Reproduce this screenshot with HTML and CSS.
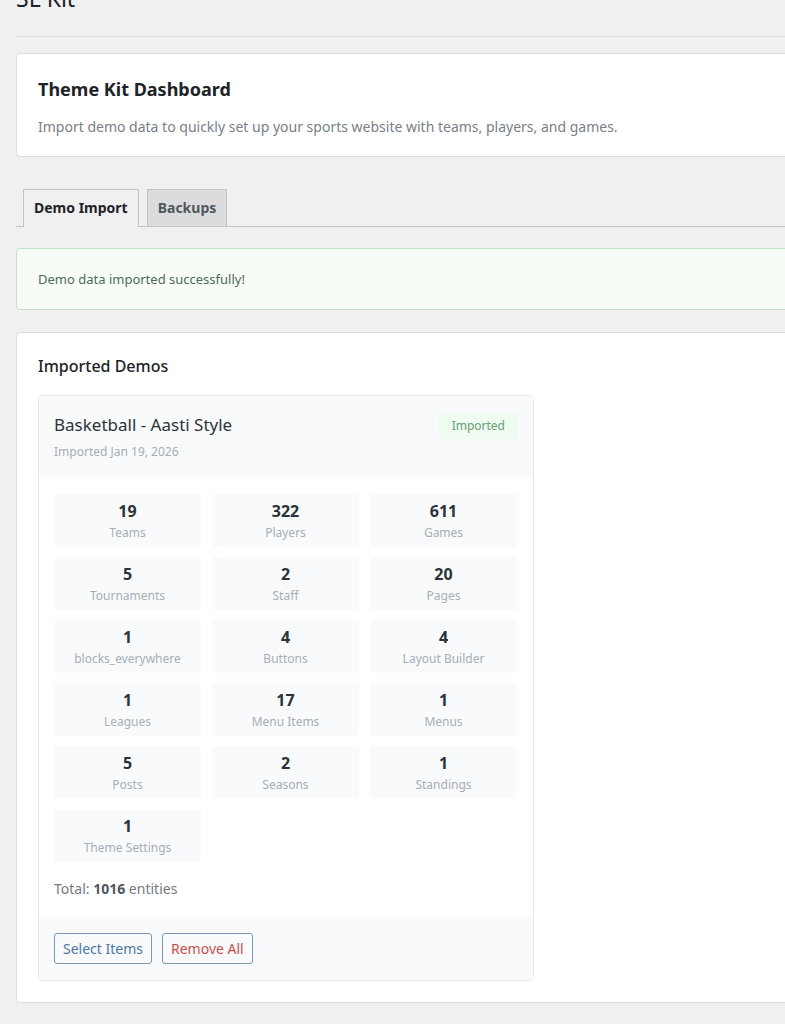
FILE: index.html
```html
<!DOCTYPE html>
<html lang="en">
<head>
  <meta charset="UTF-8" />
  <title>SL Kit</title>
  <link rel="stylesheet" href="styles.css">
</head>
<body>
  <div class="wrap">
    <h1 class="page-title">SL Kit</h1>
    <hr class="title-rule" />

    <div class="panel intro">
      <h2>Theme Kit Dashboard</h2>
      <p>Import demo data to quickly set up your sports website with teams, players, and games.</p>
    </div>

    <nav class="tabs">
      <a class="tab active">Demo Import</a>
      <a class="tab">Backups</a>
    </nav>

    <div class="notice">Demo data imported successfully!</div>

    <div class="panel demos">
      <h3>Imported Demos</h3>

      <div class="demo">
        <div class="demo-head">
          <div>
            <div class="demo-title">Basketball - Aasti Style</div>
            <div class="demo-date">Imported Jan 19, 2026</div>
          </div>
          <span class="badge">Imported</span>
        </div>

        <div class="demo-body">
          <div class="stats">
            <div class="stat"><strong>19</strong><span>Teams</span></div>
            <div class="stat"><strong>322</strong><span>Players</span></div>
            <div class="stat"><strong>611</strong><span>Games</span></div>
            <div class="stat"><strong>5</strong><span>Tournaments</span></div>
            <div class="stat"><strong>2</strong><span>Staff</span></div>
            <div class="stat"><strong>20</strong><span>Pages</span></div>
            <div class="stat"><strong>1</strong><span>blocks_everywhere</span></div>
            <div class="stat"><strong>4</strong><span>Buttons</span></div>
            <div class="stat"><strong>4</strong><span>Layout Builder</span></div>
            <div class="stat"><strong>1</strong><span>Leagues</span></div>
            <div class="stat"><strong>17</strong><span>Menu Items</span></div>
            <div class="stat"><strong>1</strong><span>Menus</span></div>
            <div class="stat"><strong>5</strong><span>Posts</span></div>
            <div class="stat"><strong>2</strong><span>Seasons</span></div>
            <div class="stat"><strong>1</strong><span>Standings</span></div>
            <div class="stat"><strong>1</strong><span>Theme Settings</span></div>
          </div>
          <p class="total">Total: <b>1016</b> entities</p>
        </div>

        <div class="demo-foot">
          <button class="btn btn-select">Select Items</button>
          <button class="btn btn-remove">Remove All</button>
        </div>
      </div>
    </div>
  </div>
</body>
</html>
```

FILE: styles.css
```css
body {
  margin: 0;
  background: #f0f0f1;
  font-family: 'Noto Sans', sans-serif;
  color: #1d2327;
  overflow: hidden;
}

.wrap {
  width: 1000px;
  padding-left: 16px;
}

.page-title {
  margin: -17px 0 0;
  font-size: 23px;
  font-weight: 400;
  line-height: 30px;
  color: #1d2327;
}

.title-rule {
  margin: 23px 0 0;
  border: 0;
  border-top: 1px solid #dcdcde;
}

.panel {
  background: #fff;
  border: 1px solid #dcdcde;
  border-radius: 4px;
  padding: 22px 21px;
}

.intro {
  margin-top: 16px;
  height: 59px;
  padding-bottom: 21px;
}

.intro h2 {
  margin: 0;
  font-size: 18px;
  font-weight: 700;
  line-height: 26px;
  color: #1d2327;
}

.intro p {
  margin: 15px 0 0;
  font-size: 14px;
  line-height: 20px;
  color: #7a8088;
}

.tabs {
  display: flex;
  gap: 8px;
  margin-top: 32px;
  padding-left: 7px;
  border-bottom: 1px solid #c3c4c7;
}

.tab {
  display: block;
  height: 36px;
  line-height: 36px;
  padding: 0 10px;
  font-size: 14px;
  font-weight: 700;
  color: #50575e;
  background: #dcdcde;
  border: 1px solid #c3c4c7;
  border-bottom: 0;
  margin-bottom: -1px;
}

.tab.active {
  background: #f0f0f1;
  color: #1d2327;
  height: 37px;
}

.notice {
  margin-top: 21px;
  height: 60px;
  line-height: 60px;
  padding-left: 21px;
  background: #f7fcf7;
  border: 1px solid #bfe3c4;
  border-radius: 4px;
  font-size: 13px;
  color: #4d6b57;
}

.demos {
  margin-top: 22px;
  padding-bottom: 21px;
}

.demos h3 {
  margin: 0 0 18px;
  font-size: 16px;
  font-weight: 500;
  line-height: 22px;
  color: #1d2327;
}

.demo {
  width: 494px;
  border: 1px solid #e6e9ec;
  border-radius: 4px;
}

.demo-head {
  display: flex;
  justify-content: space-between;
  align-items: flex-start;
  padding: 17px 15px 16px;
  background: #f8fafc;
}

.demo-title {
  font-size: 17px;
  line-height: 24px;
  color: #2c3338;
}

.demo-date {
  margin-top: 6px;
  font-size: 12px;
  line-height: 18px;
  color: #a7aeb5;
}

.badge {
  padding: 3px 13px;
  background: #effaf1;
  border-radius: 3px;
  font-size: 12px;
  line-height: 20px;
  color: #669f74;
}

.demo-body {
  padding: 17px 15px 0;
}

.stats {
  display: grid;
  grid-template-columns: repeat(3, 147px);
  column-gap: 11px;
  row-gap: 10px;
}

.stat {
  display: flex;
  flex-direction: column;
  align-items: center;
  height: 53px;
  padding-top: 7px;
  box-sizing: border-box;
  background: #f8fafc;
  border-radius: 3px;
}

.stat strong {
  font-size: 16px;
  line-height: 20px;
  font-weight: 700;
  color: #2c3338;
}

.stat span {
  margin-top: 2px;
  font-size: 12px;
  line-height: 20px;
  color: #a7aeb5;
}

.total {
  margin: 17px 0 18px;
  font-size: 14px;
  line-height: 20px;
  color: #73797f;
}

.total b {
  color: #50575e;
}

.demo-foot {
  display: flex;
  gap: 10px;
  padding: 16px 15px;
  background: #f8fafc;
}

.btn {
  height: 31px;
  padding: 0 8px;
  background: #f8fafc;
  border: 1px solid #7e97b2;
  border-radius: 3px;
  font-family: inherit;
  font-size: 14px;
}

.btn-select {
  color: #4f77a3;
}

.btn-remove {
  color: #c9504a;
}
```
